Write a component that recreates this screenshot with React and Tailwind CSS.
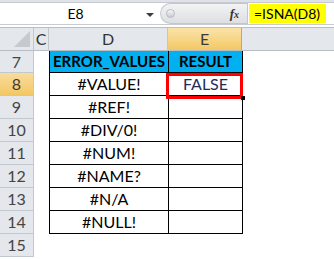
import React from 'react'

const rows = [
  { n: 8, v: '#VALUE!', r: 'FALSE' },
  { n: 9, v: '#REF!' },
  { n: 10, v: '#DIV/0!' },
  { n: 11, v: '#NUM!' },
  { n: 12, v: '#NAME?' },
  { n: 13, v: '#N/A' },
  { n: 14, v: '#NULL!' },
]

const font = { fontFamily: 'Lato, "Open Sans", sans-serif' }

function RowHead({ n, active, h }) {
  return (
    <div
      className={`w-[34px] shrink-0 flex items-center justify-center border-r border-b border-[#c3c8ce] text-[16px] ${
        active ? 'bg-gradient-to-b from-[#f9dc9c] to-[#f3c863] text-[#3b3b3b]' : 'bg-[#e4e7eb] text-[#454545]'
      } ${h}`}
    >
      {n}
    </div>
  )
}

export default function App() {
  return (
    <div className="relative w-[334px] h-[259px] overflow-hidden bg-white" style={font}>
      {/* formula bar */}
      <div className="h-[3px] bg-[#dfe2e6] border-b border-[#c6cad0]" />
      <div className="flex h-[22px] bg-white border-b border-[#c9cdd2]">
        <div className="w-[160px] shrink-0 flex items-center relative">
          <span className="flex-1 text-center text-[14px] text-black pl-[6px]">E8</span>
          <svg width="10" height="6" className="mr-[5px] mt-[2px]" viewBox="0 0 10 6">
            <path d="M1 1 L9 1 L5 5 Z" fill="#3c3c3c" />
          </svg>
        </div>
        <div className="w-[87px] shrink-0 flex items-center rounded-l-full bg-gradient-to-b from-[#f2f3f5] to-[#dcdfe3] border border-[#c3c7cc] border-r-0 relative">
          <div className="ml-[5px] w-[9px] h-[9px] rounded-full bg-gradient-to-b from-[#f7f7f7] to-[#c9ccd0] border border-[#b7bbc0]" />
          <span className="ml-auto mr-[8px] text-[13px] italic font-bold text-[#333]" style={{ fontFamily: '"Liberation Serif", serif' }}>
            f<span className="text-[10px]">x</span>
          </span>
        </div>
        <div className="flex-1 flex items-stretch border-l border-[#c3c7cc] pl-[1px] py-[1px]">
          <div className="bg-[#ffff00] w-[77px] flex items-center pl-[5px] text-[14px] text-black">=ISNA(D8)</div>
        </div>
      </div>
      <div className="h-[3px] bg-white border-b border-[#b9bec4]" />

      {/* column headers */}
      <div className="flex h-[23px] bg-[#e4e7eb] border-b border-[#b9bec4] text-[16px] text-[#333]">
        <div className="w-[34px] shrink-0 border-r border-[#c3c8ce] relative">
          <svg className="absolute right-[3px] bottom-[3px]" width="16" height="16" viewBox="0 0 16 16">
            <path d="M16 0 L16 16 L0 16 Z" fill="#c6cacf" />
          </svg>
        </div>
        <div className="w-[15px] shrink-0 border-r border-[#c3c8ce] flex items-center justify-center">C</div>
        <div className="w-[119px] shrink-0 border-r border-[#c3c8ce] flex items-center justify-center">D</div>
        <div className="w-[74px] shrink-0 border-r border-[#d9a440] bg-gradient-to-b from-[#fbe3a8] to-[#f3c863] flex items-center justify-center text-[#3b3b3b]">
          E
        </div>
        <div className="flex-1" />
      </div>

      {/* row 7 */}
      <div className="flex h-[22px]">
        <RowHead n={7} h="h-[22px]" />
        <div className="w-[15px] shrink-0" />
        <div className="w-[120px] shrink-0 bg-[#00b0f0] border-l border-r border-b border-black flex items-center justify-center font-bold text-[15px] text-black">
          ERROR_VALUES
        </div>
        <div className="w-[74px] shrink-0 bg-[#00b0f0] border-r border-b border-black flex items-center justify-center font-bold text-[15px] text-black">
          RESULT
        </div>
      </div>

      {rows.map((row) => (
        <div key={row.n} className="flex h-[23px]">
          <RowHead n={row.n} active={row.n === 8} h="h-[23px]" />
          <div className="w-[15px] shrink-0" />
          <div className="w-[120px] shrink-0 border-l border-r border-b border-black flex items-center justify-center text-[16px] text-black">
            {row.v}
          </div>
          <div className="w-[74px] shrink-0 border-r border-b border-black flex items-center justify-center text-[16px] text-[#1f2d57]">
            {row.r}
          </div>
        </div>
      ))}

      <div className="flex h-[23px]">
        <RowHead n={15} h="h-[23px]" />
      </div>

      {/* selected cell highlight */}
      <div className="absolute left-[166px] top-[73px] w-[77px] h-[26px] border-[3px] border-[#ff0000]" />
      <div className="absolute left-[241px] top-[96px] w-[4px] h-[4px] bg-black" />
    </div>
  )
}
